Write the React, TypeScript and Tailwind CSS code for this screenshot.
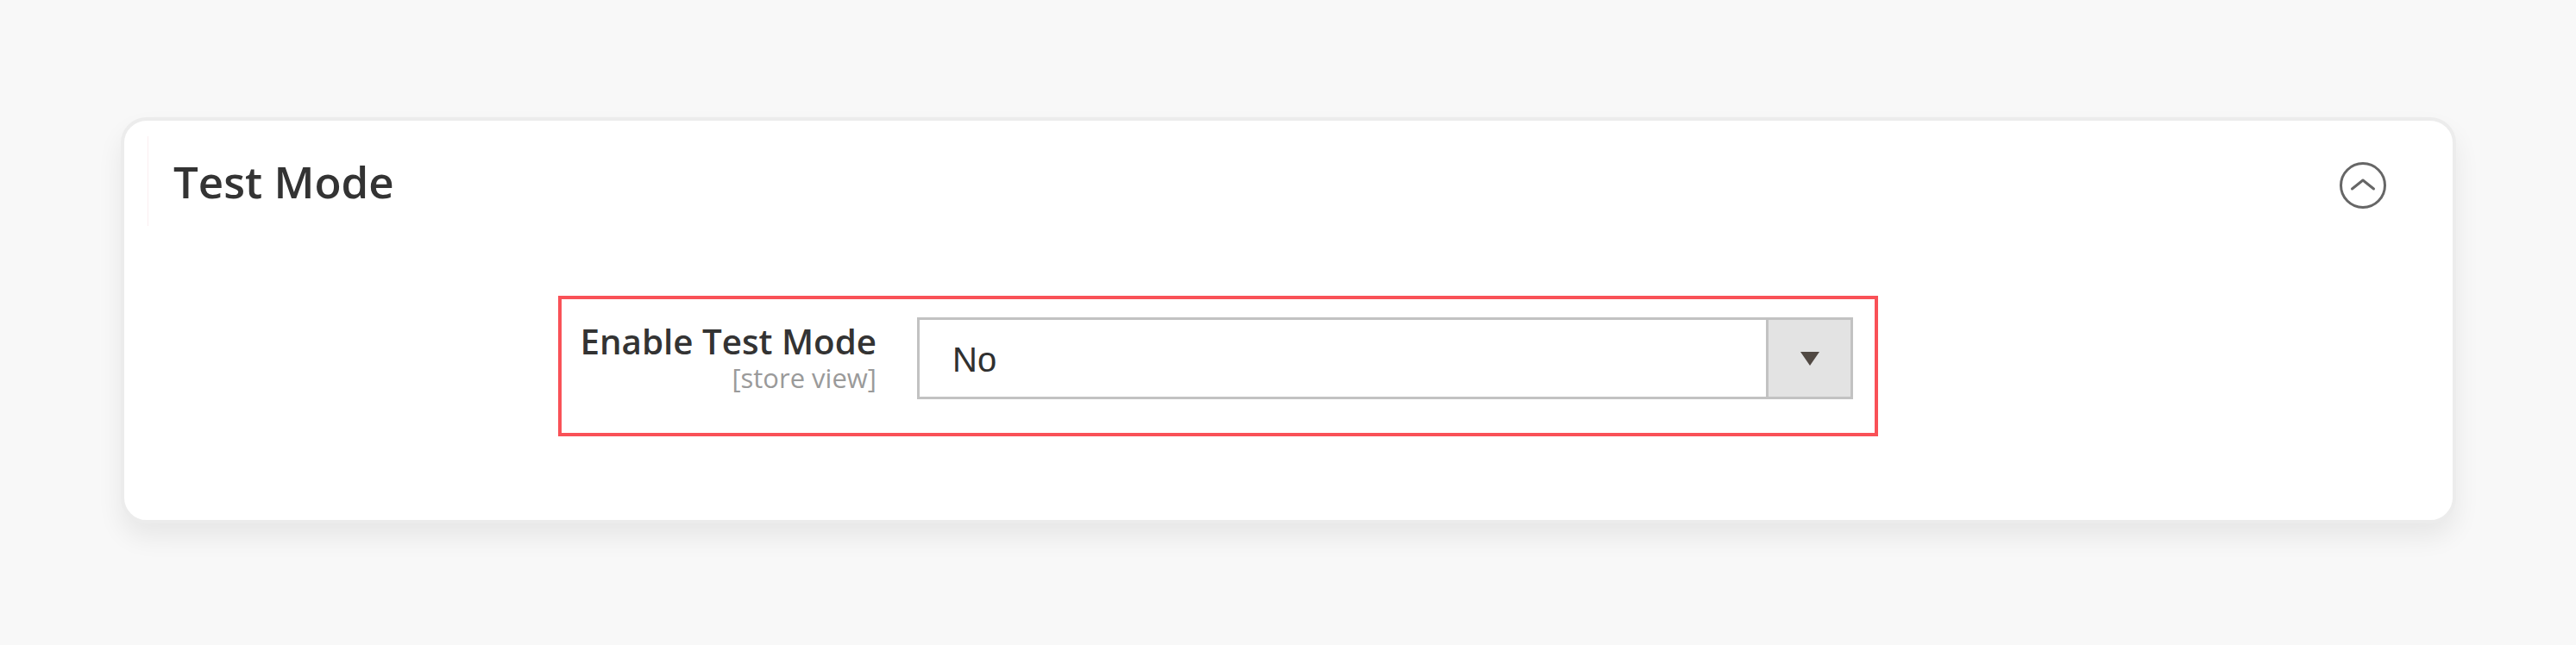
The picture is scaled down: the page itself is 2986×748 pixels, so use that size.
import React from "react";

export default function App() {
  return (
    <div className="w-full h-[748px] bg-[#f8f8f8] pt-[136px] px-[139px] pl-[140px]" style={{ fontFamily: '"Open Sans", sans-serif' }}>
      <div className="w-[2707px] h-[471px] bg-white border-4 border-[#ececec] rounded-[30px] shadow-[0_16px_30px_rgba(0,0,0,0.07)]">
        <div className="flex items-start pl-[27px] pr-[77px] pt-[18px]">
          <div className="flex-1 h-[104px] border-l border-[#fbeef0] flex items-center pl-[29px]">
            <h2 className="text-[51px] leading-none font-semibold text-[#333333]" style={{ fontFamily: '"Open Sans", sans-serif' }}>
              Test Mode
            </h2>
          </div>
          <svg className="mt-[30px]" width="54" height="54" viewBox="0 0 54 54" fill="none">
            <circle cx="27" cy="27" r="25.5" stroke="#666666" strokeWidth="3" />
            <path d="M14.5 31 L27 21 L39.5 31" stroke="#666666" strokeWidth="3" strokeLinecap="round" strokeLinejoin="round" />
          </svg>
        </div>
        <div className="ml-[503px] mt-[81px] w-[1530px] h-[163px] border-4 border-[#f95157] flex items-start pt-[21px] pl-0 pr-[25px]">
          <div className="w-[365px] text-right">
            <div className="text-[40.3px] leading-[55px] font-semibold text-[#333333]">Enable Test Mode</div>
            <div className="text-[31px] leading-[30px] text-[#9a9a9a]">[store view]</div>
          </div>
          <div className="ml-[47px] w-[1085px] h-[95px] border-[3px] border-[#c2c2c2] flex">
            <div className="flex-1 flex items-center pl-[38px] pt-[3px] text-[40px] text-[#303030]" style={{ fontFamily: '"Liberation Sans", Arial, sans-serif' }}>
              No
            </div>
            <div className="w-[98px] h-full bg-[#e3e3e3] border-l-[3px] border-[#c2c2c2] flex items-center justify-center">
              <svg width="22" height="16" viewBox="0 0 22 16">
                <path d="M0 0 L22 0 L11 16 Z" fill="#514943" />
              </svg>
            </div>
          </div>
        </div>
      </div>
    </div>
  );
}
